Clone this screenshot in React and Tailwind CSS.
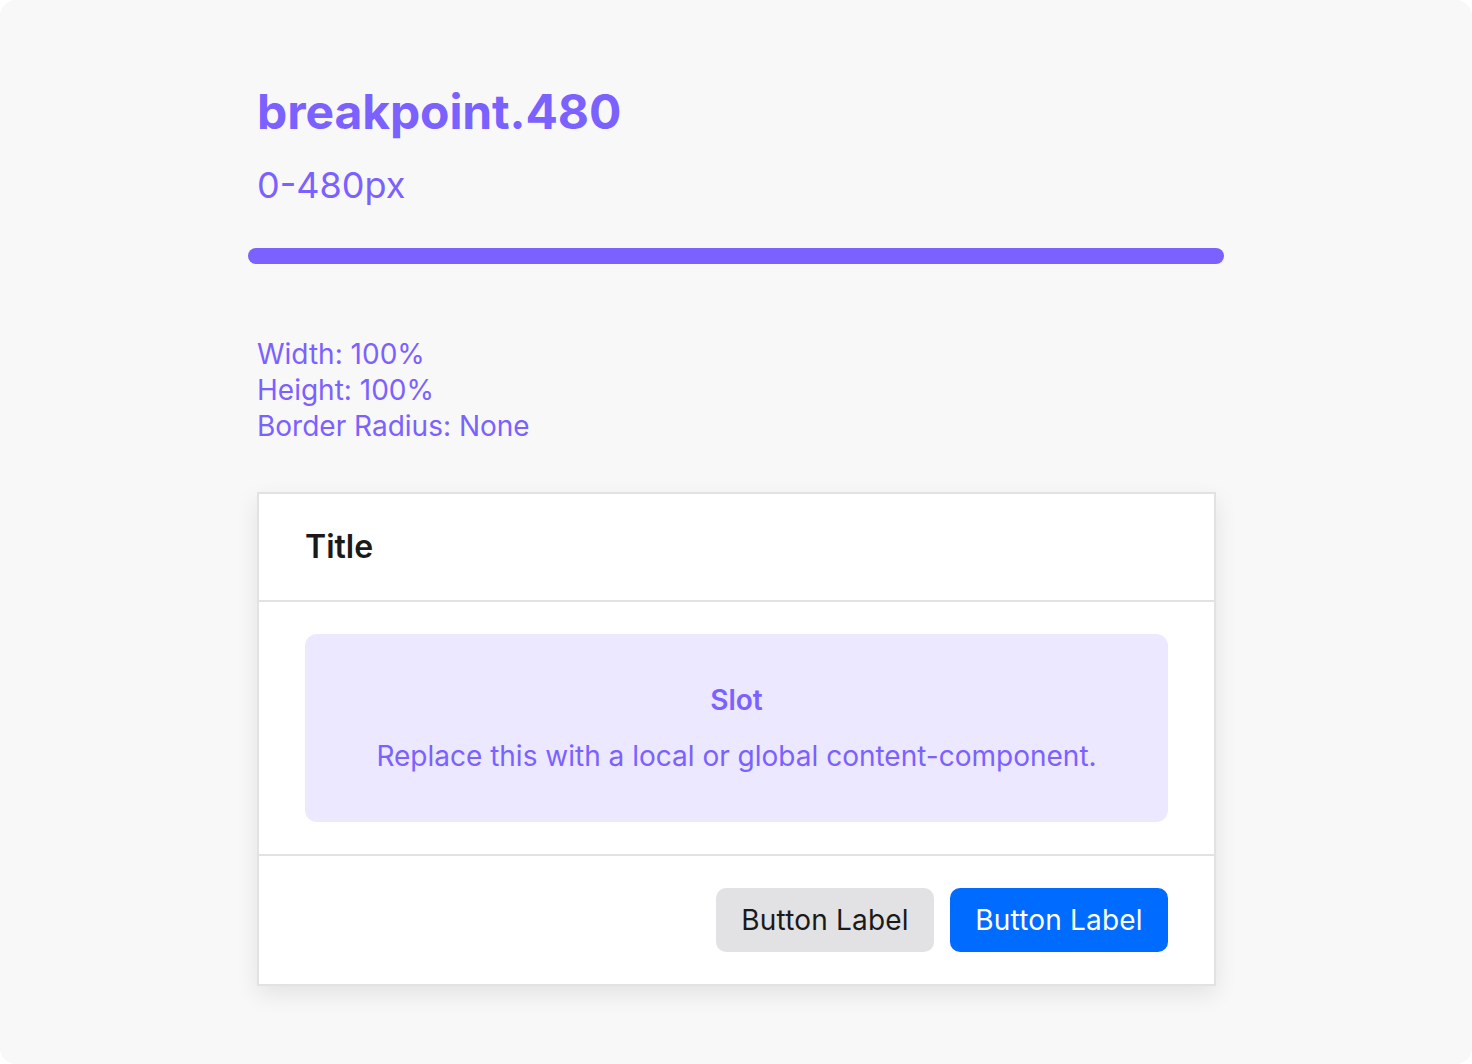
export default function App() {
  return (
    <div className="w-[1472px] h-[1064px] bg-white" style={{ fontFamily: 'Inter, "Noto Sans", sans-serif' }}>
      <div className="w-full h-full rounded-2xl bg-[#f8f8f8] pl-[257px] pt-[84px]">
        <h1 className="text-[48px] leading-[56px] font-bold text-[#7b61ff] tracking-[-0.1px]">breakpoint.480</h1>
        <p className="mt-[23px] text-[36px] leading-[44px] text-[#7b61ff]">0-480px</p>

        <div className="mt-[41px] -ml-[9px] w-[976px] h-4 rounded-full bg-[#7b61ff]" />

        <div className="mt-[72px] text-[28px] leading-[36px] text-[#7b61ff]">
          <div>Width: 100%</div>
          <div>Height: 100%</div>
          <div>Border Radius: None</div>
        </div>

        <div className="mt-[48px] w-[959px] bg-white border-2 border-[#e2e2e2] shadow-[0_8px_22px_rgba(0,0,0,0.09)]">
          <div className="px-[46px] h-[108px] flex items-center border-b-2 border-[#e2e2e2]">
            <span className="text-[32px] font-semibold text-[#1a1a1a]">Title</span>
          </div>
          <div className="px-[46px] py-8 border-b-2 border-[#e2e2e2]">
            <div className="h-[188px] rounded-xl bg-[#ece8ff] flex flex-col items-center justify-center gap-5 text-[#7b61ff]">
              <div className="text-[28px] leading-[36px] font-semibold">Slot</div>
              <div className="text-[28px] leading-[36px]">Replace this with a local or global content-component.</div>
            </div>
          </div>
          <div className="px-[46px] py-8 flex justify-end gap-4">
            <button className="w-[218px] h-16 rounded-[10px] bg-[#e2e2e4] text-[28px] tracking-[0.2px] text-[#1a1a1a]">Button Label</button>
            <button className="w-[218px] h-16 rounded-[10px] bg-[#006cff] text-[28px] tracking-[0.2px] text-white">Button Label</button>
          </div>
        </div>
      </div>
    </div>
  );
}
